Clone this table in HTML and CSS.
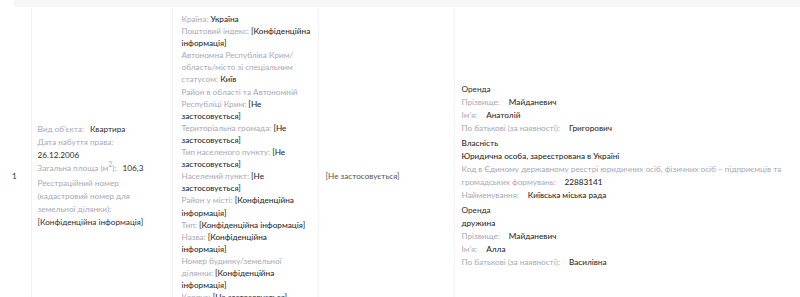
FILE: index.html
```html
<!DOCTYPE html>
<html lang="uk">
<head>
<meta charset="utf-8">
<link rel="stylesheet" href="styles.css">
</head>
<body>
<div class="head-band"></div>
<table class="reg">
  <tr>
    <td class="c-num">1</td>
    <td class="c-obj">
      <div class="ln"><span class="lb">Вид об’єкта:</span><span class="v sp">Квартира</span></div>
      <div class="ln"><span class="lb">Дата набуття права:</span> <span class="v">26.12.2006</span></div>
      <div class="ln area"><span class="lb">Загальна площа (м<sup>2</sup>):</span><span class="v sp">106,3</span></div>
      <div class="ln"><span class="lb">Реєстраційний номер (кадастровий номер для земельної ділянки):</span> <span class="v">[Конфіденційна інформація]</span></div>
    </td>
    <td class="c-addr">
      <div class="ln"><span class="lb">Країна:</span> <span class="v b">Україна</span></div>
      <div class="ln"><span class="lb">Поштовий індекс:</span> <span class="v b">[Конфіденційна інформація]</span></div>
      <div class="ln"><span class="lb">Автономна Республіка Крим/ область/місто зі спеціальним статусом:</span> <span class="v b">Київ</span></div>
      <div class="ln"><span class="lb">Район в області та Автономній Республіці Крим:</span> <span class="v b">[Не застосовується]</span></div>
      <div class="ln"><span class="lb">Територіальна громада:</span> <span class="v b">[Не застосовується]</span></div>
      <div class="ln"><span class="lb">Тип населеного пункту:</span> <span class="v b">[Не застосовується]</span></div>
      <div class="ln"><span class="lb">Населений пункт:</span> <span class="v b">[Не застосовується]</span></div>
      <div class="ln"><span class="lb">Район у місті:</span> <span class="v b">[Конфіденційна інформація]</span></div>
      <div class="ln"><span class="lb">Тип:</span> <span class="v b">[Конфіденційна інформація]</span></div>
      <div class="ln"><span class="lb">Назва:</span> <span class="v b">[Конфіденційна інформація]</span></div>
      <div class="ln"><span class="lb">Номер будинку/земельної ділянки:</span> <span class="v b">[Конфіденційна інформація]</span></div>
      <div class="ln"><span class="lb">Корпус:</span> <span class="v b">[Не застосовується]</span></div>
      <div class="ln"><span class="lb">Тип:</span> <span class="v b">[Конфіденційна інформація]</span></div>
      <div class="ln"><span class="lb">Номер:</span> <span class="v b">[Конфіденційна інформація]</span></div>
    </td>
    <td class="c-na"><span class="na">[Не застосовується]</span></td>
    <td class="c-own">
      <div class="blk">
        <div class="ln v">Оренда</div>
        <div class="ln"><span class="lb">Прізвище:</span><span class="v b sp2">Майданевич</span></div>
        <div class="ln"><span class="lb">Ім’я:</span><span class="v b sp2">Анатолій</span></div>
        <div class="ln"><span class="lb">По батькові (за наявності):</span><span class="v b sp2">Григорович</span></div>
      </div>
      <div class="blk">
        <div class="ln v b">Власність</div>
        <div class="ln v b">Юридична особа, зареєстрована в Україні</div>
        <div class="ln"><span class="lb">Код в Єдиному державному реєстрі юридичних осіб, фізичних осіб – підприємців та громадських формувань:</span><span class="v b sp2">22883141</span></div>
        <div class="ln"><span class="lb">Найменування:</span><span class="v b sp2">Київська міська рада</span></div>
      </div>
      <div class="blk">
        <div class="ln v">Оренда</div>
        <div class="ln v b">дружина</div>
        <div class="ln"><span class="lb">Прізвище:</span><span class="v b sp2">Майданевич</span></div>
        <div class="ln"><span class="lb">Ім’я:</span><span class="v b sp2">Алла</span></div>
        <div class="ln"><span class="lb">По батькові (за наявності):</span><span class="v b sp2">Василівна</span></div>
      </div>
    </td>
  </tr>
</table>
</body>
</html>
```

FILE: styles.css
```css
html, body {
  margin: 0;
  padding: 0;
  background: #ffffff;
}
body {
  font-family: "Lato", "Noto Sans", sans-serif;
  font-size: 8.2px;
  color: #2e2e2e;
}
.head-band {
  height: 7px;
  margin-left: 14px;
  background: #f6f6f7;
}
.reg {
  border-collapse: collapse;
  margin-top: 1px;
  table-layout: fixed;
}
.reg td {
  vertical-align: middle;
  padding: 0;
}
.c-num {
  width: 31px;
  padding-left: 12px !important;
  box-sizing: border-box;
  color: #333;
}
.c-obj {
  width: 141px;
  box-sizing: border-box;
  padding: 0 24px 0 6px !important;
  border-left: 1px solid #f2f2f3;
  line-height: 13px;
}
.c-addr {
  width: 146px;
  box-sizing: border-box;
  padding: 5px 4px 5px 9px !important;
  border-left: 1px solid #f6f6f6;
  line-height: 12.1px;
}
.c-na {
  width: 136px;
  box-sizing: border-box;
  padding: 0 6px 0 7px !important;
  border-left: 1px solid #f2f2f3;
}
.c-own {
  width: 346px;
  box-sizing: border-box;
  padding: 0 10px 0 7px !important;
  border-left: 1px solid #f2f2f3;
  line-height: 13px;
}
.lb {
  color: #a6a9b6;
}
.v {
  color: #2e2e2e;
}
.b {
  font-weight: 500;
}
.sp {
  margin-left: 6px;
}
.sp2 {
  margin-left: 9px;
}
.area {
  padding-bottom: 2px;
}
sup {
  font-size: 7px;
  line-height: 0;
}
.na {
  color: #555;
}
.blk + .blk {
  margin-top: 2px;
}
```
